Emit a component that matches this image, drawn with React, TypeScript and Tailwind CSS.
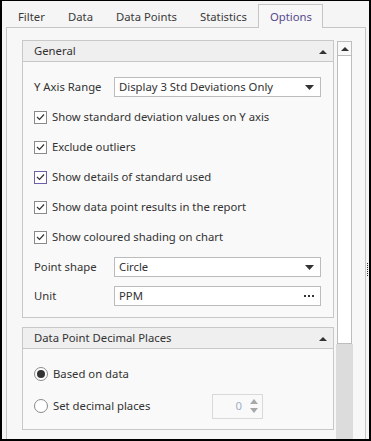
import React from "react";

const tabs = [
  { name: "Filter", w: "w-[50px]" },
  { name: "Data", w: "w-[48px]" },
  { name: "Data Points", w: "w-[84px]" },
  { name: "Statistics", w: "w-[70px]" },
];

const checks = [
  { label: "Show standard deviation values on Y axis", focus: false },
  { label: "Exclude outliers", focus: false },
  { label: "Show details of standard used", focus: true },
  { label: "Show data point results in the report", focus: false },
  { label: "Show coloured shading on chart", focus: false },
];

function CaretUp({ className = "" }: { className?: string }) {
  return (
    <svg className={className} width="8" height="5" viewBox="0 0 8 5">
      <path d="M0 5L4 1L8 5Z" fill="#333333" />
    </svg>
  );
}

function CaretDown() {
  return (
    <svg width="9" height="5" viewBox="0 0 9 5">
      <path d="M0 0H9L4.5 5Z" fill="#333333" />
    </svg>
  );
}

function Checkbox({ label, focus }: { label: string; focus: boolean }) {
  return (
    <div className="flex items-center h-[30px]">
      <div
        className={`w-[13px] h-[13px] bg-white border flex items-center justify-center ${
          focus ? "border-[#6d5fa8]" : "border-[#8a8a8a]"
        }`}
      >
        <svg width="9" height="8" viewBox="0 0 9 8">
          <path d="M1 4L3.5 6.5L8 1.5" fill="none" stroke="#333333" strokeWidth="1.2" />
        </svg>
      </div>
      <span className="ml-[5px]">{label}</span>
    </div>
  );
}

function SelectBox({ value, dots }: { value: string; dots?: boolean }) {
  return (
    <div className="w-[207px] h-[20px] bg-white border border-[#bcbcbc] flex items-center pl-[4px] pr-[6px]">
      <span className="flex-1">{value}</span>
      {dots ? (
        <svg width="10" height="2" viewBox="0 0 10 2">
          <rect x="0" y="0" width="2" height="2" fill="#333333" />
          <rect x="4" y="0" width="2" height="2" fill="#333333" />
          <rect x="8" y="0" width="2" height="2" fill="#333333" />
        </svg>
      ) : (
        <CaretDown />
      )}
    </div>
  );
}

function GroupHeader({ title }: { title: string }) {
  return (
    <div className="h-[21px] bg-[#efefef] border-b border-[#c8c8c8] flex items-center pl-[11px] pr-[6px]">
      <span className="flex-1">{title}</span>
      <CaretUp />
    </div>
  );
}

function Radio({ checked }: { checked: boolean }) {
  return (
    <div className="w-[14px] h-[14px] rounded-full bg-white border border-[#8a8a8a] flex items-center justify-center">
      {checked && <div className="w-[8px] h-[8px] rounded-full bg-[#333333]" />}
    </div>
  );
}

export default function App() {
  return (
    <div
      className="relative w-[371px] h-[441px] bg-[#f5f5f5] border-t border-l-2 border-r-2 border-b-2 border-black flex flex-col text-[11.3px] text-[#333333] overflow-hidden"
      style={{ fontFamily: '"Segoe UI", "Noto Sans", sans-serif' }}
    >
      <div className="flex h-[26px] pl-[4px] shrink-0">
        {tabs.map((t) => (
          <div key={t.name} className={`${t.w} pl-[12px] flex items-center pt-[6px] text-[#3a3a3a]`}>
            {t.name}
          </div>
        ))}
        <div className="w-[65px] mt-[3px] h-[24px] bg-[#f7f7f7] border-t border-l border-r border-[#c6c6c6] pl-[11px] flex items-center pt-[1px] text-[#57498f] relative z-10">
          Options
        </div>
      </div>

      <div className="ml-[4px] mr-[3px] flex-1 bg-[#f7f7f7] border-t border-l border-r border-[#c6c6c6] flex pt-[12px] pl-[15px] pr-[12px] min-h-0">
        <div className="w-[312px] flex flex-col">
          <div className="border border-[#c8c8c8] bg-[#f9f9f9]">
            <GroupHeader title="General" />
            <div className="pl-[11px] pr-[12px] pt-[10px] pb-[7px]">
              <div className="flex items-center h-[30px]">
                <span className="w-[80px]">Y Axis Range</span>
                <SelectBox value="Display 3 Std Deviations Only" />
              </div>
              {checks.map((c) => (
                <Checkbox key={c.label} label={c.label} focus={c.focus} />
              ))}
              <div className="flex items-center h-[30px]">
                <span className="w-[80px]">Point shape</span>
                <SelectBox value="Circle" />
              </div>
              <div className="flex items-center h-[28px]">
                <span className="w-[80px]">Unit</span>
                <SelectBox value="PPM" dots />
              </div>
            </div>
          </div>

          <div className="mt-[9px] border border-[#c8c8c8] bg-[#f9f9f9]">
            <GroupHeader title="Data Point Decimal Places" />
            <div className="pl-[11px] pr-[12px] pt-[9px] pb-[7px]">
              <div className="flex items-center h-[32px]">
                <Radio checked />
                <span className="ml-[5px]">Based on data</span>
              </div>
              <div className="flex items-center h-[32px]">
                <Radio checked={false} />
                <span className="ml-[5px] w-[159px]">Set decimal places</span>
                <div className="w-[51px] h-[25px] border border-[#d9d9d9] bg-[#f9f9f9] flex items-center justify-end pr-[4px]">
                  <span className="text-[#9fb0c8] mr-[8px]">0</span>
                  <div className="flex flex-col gap-[4px]">
                    <svg width="8" height="5" viewBox="0 0 8 5">
                      <path d="M0 5L4 0L8 5Z" fill="#a8a8a8" />
                    </svg>
                    <svg width="8" height="5" viewBox="0 0 8 5">
                      <path d="M0 0H8L4 5Z" fill="#a8a8a8" />
                    </svg>
                  </div>
                </div>
              </div>
            </div>
          </div>
        </div>

        <div className="ml-[2px] w-[17px] flex flex-col">
          <div className="mx-[1px] mt-[1px] h-[15px] border border-[#bdbdbd] bg-[#f9f9f9] flex items-center justify-center">
            <CaretUp />
          </div>
          <div className="mx-[1px] h-[288px] border-l border-r border-b border-[#bdbdbd] bg-white" />
          <div className="flex-1 bg-[#dcdcdc]" />
        </div>
      </div>

      <div className="absolute right-[1px] top-[262px] h-[13px] border-l border-dotted border-[#333333]" />
    </div>
  );
}
